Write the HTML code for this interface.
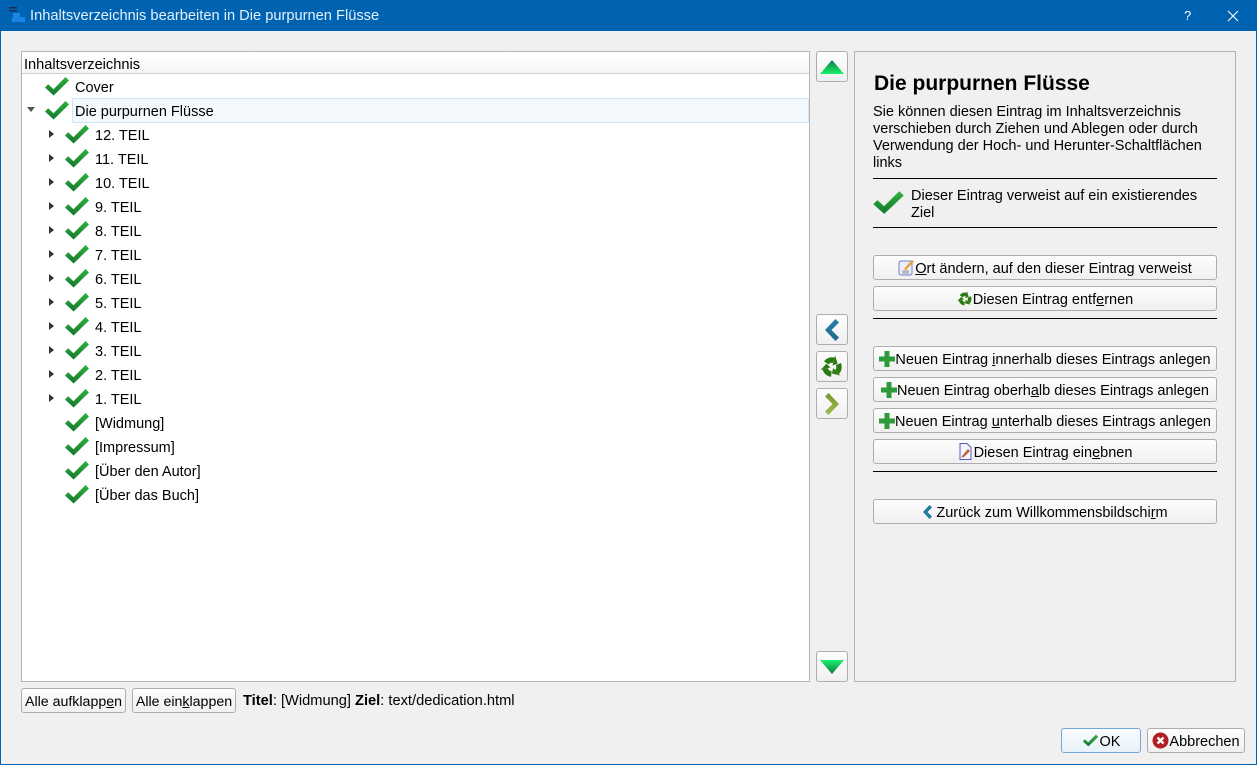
<!DOCTYPE html>
<html><head><meta charset="utf-8"><style>
html,body{margin:0;padding:0;width:1257px;height:765px;overflow:hidden;background:#f0f0f0}
body{font-family:"Liberation Sans",sans-serif;font-size:14.5px;color:#000;position:relative}
.a{position:absolute;white-space:nowrap}
.t{position:absolute;white-space:nowrap;line-height:24px;height:24px;background:transparent;margin-top:1px}
.b{position:absolute;box-sizing:border-box;border:1px solid #adadad;border-radius:3px;background:linear-gradient(#fdfdfd,#f0f0f0);display:flex;align-items:center;justify-content:center;white-space:nowrap;height:25px}
.b span{position:relative;top:1px}
.c{position:absolute;width:26px;height:22px}
.tri{position:absolute;width:0;height:0;border-top:4.5px solid transparent;border-bottom:4.5px solid transparent;border-left:5px solid #333}
.hr{position:absolute;left:873px;width:344px;height:1px;background:#000}
svg{display:block;flex:none}
u{text-underline-offset:1px}
</style></head><body>
<svg width="0" height="0" style="position:absolute"><defs>
<linearGradient id="cg" x1="0" y1="0" x2="0" y2="1"><stop offset="0" stop-color="#2fb040"/><stop offset="1" stop-color="#14792a"/></linearGradient>
<linearGradient id="up" x1="0" y1="0" x2="0" y2="1"><stop offset="0" stop-color="#067a3a"/><stop offset="1" stop-color="#1cf070"/></linearGradient>
<linearGradient id="dn" x1="0" y1="0" x2="0" y2="1"><stop offset="0" stop-color="#1cf070"/><stop offset="1" stop-color="#067a3a"/></linearGradient>
<linearGradient id="bl" x1="0" y1="0" x2="0" y2="1"><stop offset="0" stop-color="#2a7fa8"/><stop offset="1" stop-color="#1f6a90"/></linearGradient>
<linearGradient id="gr" x1="0" y1="0" x2="0" y2="1"><stop offset="0" stop-color="#6f9a2a"/><stop offset="1" stop-color="#a3bd52"/></linearGradient>
<symbol id="chk" viewBox="0 0 26 22"><path d="M1 11.500 4.200 8.300 9.500 13.200 21.500 1 25 4.500 9.600 19.500Z" fill="url(#cg)"/></symbol>
<g id="ra"><path d="M6.270 7.980A7 7 0 0 1 13.810 5.240" fill="none" stroke="#2c7a12" stroke-width="5.500"/><path d="M12.390 10.550 15.100.41 17.630 8.750Z" fill="#2c7a12"/></g>
<symbol id="rec" viewBox="0 0 24 24"><use href="#ra"/><use href="#ra" transform="rotate(120 12 12)"/><use href="#ra" transform="rotate(240 12 12)"/></symbol>
<symbol id="plus" viewBox="0 0 16 16"><path d="M5.500 0h5v5.500H16v5h-5.500V16h-5v-5.500H0v-5h5.500Z" fill="#2f9a3a"/></symbol>
</defs></svg>

<!-- window frame -->
<div class="a" style="left:0;top:0;width:1255px;height:763px;border:1px solid #0063b1"></div>
<div class="a" style="left:0;top:0;width:1257px;height:31px;background:#0063b1"></div>
<svg class="a" style="left:8px;top:7px" width="18" height="16" viewBox="0 0 18 16"><path d="M1 0h8v1.500H1zM1 3h8v1.500H1z" fill="#1c2c55"/><path d="M5 6h7v4h5v5H4v-4h1z" fill="#1a84e4"/></svg>
<div class="a" style="left:30px;top:7px;font-size:14.65px;line-height:18px;color:#e4f0fa">Inhaltsverzeichnis bearbeiten in Die purpurnen Flüsse</div>
<div class="a" style="left:1184px;top:7px;color:#fff;font-size:13px;line-height:18px">?</div>
<svg class="a" style="left:1227px;top:10px" width="12" height="12" viewBox="0 0 12 12"><path d="M1 1 11 11M11 1 1 11" stroke="#fff" stroke-width="1.100"/></svg>

<!-- tree -->
<div class="a" style="left:21px;top:51px;width:787px;height:629px;border:1px solid #b4b4b4;background:#fff"></div>
<div class="a" style="left:22px;top:52px;height:21px;background:linear-gradient(#fff,#f6f6f6);border-bottom:1px solid #d0d0d0;line-height:26px;padding-left:2px;width:785px;font-size:14.6px">Inhaltsverzeichnis</div>
<div class="a" style="left:72px;top:98px;width:735px;height:23px;background:#f4f9fe;border:1px solid #cfe4f6;border-radius:2px"></div>

<svg class="c" style="left:44px;top:76px"><use href="#chk"/></svg><div class="t" style="left:75px;top:75px">Cover</div>
<div class="a" style="left:27px;top:107px;width:0;height:0;border-left:4.5px solid transparent;border-right:4.5px solid transparent;border-top:5px solid #555"></div>
<svg class="c" style="left:44px;top:100px"><use href="#chk"/></svg><div class="t" style="left:75px;top:99px">Die purpurnen Flüsse</div>

<div class="tri" style="left:49px;top:129.500px"></div><svg class="c" style="left:64px;top:124px"><use href="#chk"/></svg><div class="t" style="left:95px;top:123px">12. TEIL</div>
<div class="tri" style="left:49px;top:153.500px"></div><svg class="c" style="left:64px;top:148px"><use href="#chk"/></svg><div class="t" style="left:95px;top:147px">11. TEIL</div>
<div class="tri" style="left:49px;top:177.500px"></div><svg class="c" style="left:64px;top:172px"><use href="#chk"/></svg><div class="t" style="left:95px;top:171px">10. TEIL</div>
<div class="tri" style="left:49px;top:201.500px"></div><svg class="c" style="left:64px;top:196px"><use href="#chk"/></svg><div class="t" style="left:95px;top:195px">9. TEIL</div>
<div class="tri" style="left:49px;top:225.500px"></div><svg class="c" style="left:64px;top:220px"><use href="#chk"/></svg><div class="t" style="left:95px;top:219px">8. TEIL</div>
<div class="tri" style="left:49px;top:249.500px"></div><svg class="c" style="left:64px;top:244px"><use href="#chk"/></svg><div class="t" style="left:95px;top:243px">7. TEIL</div>
<div class="tri" style="left:49px;top:273.500px"></div><svg class="c" style="left:64px;top:268px"><use href="#chk"/></svg><div class="t" style="left:95px;top:267px">6. TEIL</div>
<div class="tri" style="left:49px;top:297.500px"></div><svg class="c" style="left:64px;top:292px"><use href="#chk"/></svg><div class="t" style="left:95px;top:291px">5. TEIL</div>
<div class="tri" style="left:49px;top:321.500px"></div><svg class="c" style="left:64px;top:316px"><use href="#chk"/></svg><div class="t" style="left:95px;top:315px">4. TEIL</div>
<div class="tri" style="left:49px;top:345.500px"></div><svg class="c" style="left:64px;top:340px"><use href="#chk"/></svg><div class="t" style="left:95px;top:339px">3. TEIL</div>
<div class="tri" style="left:49px;top:369.500px"></div><svg class="c" style="left:64px;top:364px"><use href="#chk"/></svg><div class="t" style="left:95px;top:363px">2. TEIL</div>
<div class="tri" style="left:49px;top:393.500px"></div><svg class="c" style="left:64px;top:388px"><use href="#chk"/></svg><div class="t" style="left:95px;top:387px">1. TEIL</div>
<svg class="c" style="left:64px;top:412px"><use href="#chk"/></svg><div class="t" style="left:95px;top:411px">[Widmung]</div>
<svg class="c" style="left:64px;top:436px"><use href="#chk"/></svg><div class="t" style="left:95px;top:435px">[Impressum]</div>
<svg class="c" style="left:64px;top:460px"><use href="#chk"/></svg><div class="t" style="left:95px;top:459px">[Über den Autor]</div>
<svg class="c" style="left:64px;top:484px"><use href="#chk"/></svg><div class="t" style="left:95px;top:483px">[Über das Buch]</div>

<!-- middle buttons -->
<div class="b" style="left:816px;top:51px;width:32px;height:31px"><svg width="24" height="14" viewBox="0 0 24 14"><path d="M12 0 24 14H0Z" fill="url(#up)"/></svg></div>
<div class="b" style="left:816px;top:314px;width:32px;height:31px"><svg width="14" height="22" viewBox="0 0 14 22"><path d="M10.500 0 14 3.500 6.500 11 14 18.500 10.500 22 0 11Z" fill="url(#bl)"/></svg></div>
<div class="b" style="left:816px;top:351px;width:32px;height:31px"><svg width="24" height="24"><use href="#rec"/></svg></div>
<div class="b" style="left:816px;top:388px;width:32px;height:31px"><svg width="14" height="22" viewBox="0 0 14 22"><path d="M3.500 0 0 3.500 7.500 11 0 18.500 3.500 22 14 11Z" fill="url(#gr)"/></svg></div>
<div class="b" style="left:816px;top:651px;width:32px;height:31px"><svg width="24" height="14" viewBox="0 0 24 14"><path d="M0 0H24L12 14Z" fill="url(#dn)"/></svg></div>

<!-- right panel -->
<div class="a" style="left:854px;top:51px;width:380px;height:629px;border:1px solid #b4b4b4"></div>
<div class="a" style="left:874px;top:71px;font-size:21px;font-weight:bold;line-height:25px">Die purpurnen Flüsse</div>
<div class="a" style="left:873px;top:104px;line-height:17px">Sie können diesen Eintrag im Inhaltsverzeichnis<br>verschieben durch Ziehen und Ablegen oder durch<br>Verwendung der Hoch- und Herunter-Schaltflächen<br>links</div>
<div class="hr" style="top:178px"></div>
<svg class="a" style="left:872px;top:190px" width="33" height="27" viewBox="0 0 26 22" preserveAspectRatio="none"><use href="#chk"/></svg>
<div class="a" style="left:911px;top:188px;line-height:17px">Dieser Eintrag verweist auf ein existierendes<br>Ziel</div>
<div class="hr" style="top:227px"></div>

<div class="b" style="left:873px;top:255px;width:344px"><svg width="17" height="17" viewBox="0 0 17 17"><rect x="1" y="2" width="13" height="14" rx="2" fill="#eef0fa" stroke="#6f7fd0"/><path d="M4 12h7M4 14h7" stroke="#888"/><path d="M6 10 14 1l2 1.500L8 11Z" fill="#e8a030"/></svg><span><u>O</u>rt ändern, auf den dieser Eintrag verweist</span></div>
<div class="b" style="left:873px;top:286px;width:344px"><svg width="16" height="16"><use href="#rec"/></svg><span>Diesen Eintrag entf<u>e</u>rnen</span></div>
<div class="hr" style="top:318px"></div>
<div class="b" style="left:873px;top:346px;width:344px"><svg width="16" height="16"><use href="#plus"/></svg><span>Neuen Eintrag <u>i</u>nnerhalb dieses Eintrags anlegen</span></div>
<div class="b" style="left:873px;top:377px;width:344px"><svg width="16" height="16"><use href="#plus"/></svg><span>Neuen Eintrag oberh<u>a</u>lb dieses Eintrags anlegen</span></div>
<div class="b" style="left:873px;top:408px;width:344px"><svg width="16" height="16"><use href="#plus"/></svg><span>Neuen Eintrag <u>u</u>nterhalb dieses Eintrags anlegen</span></div>
<div class="b" style="left:873px;top:439px;width:344px"><svg width="15" height="17" viewBox="0 0 15 17" style="margin-right:1px"><path d="M2 .5h7l4 4v12H2Z" fill="#f4f4ff" stroke="#5a5ac0"/><path d="M4 13 10 6l2 2-6 6-2.500.5Z" fill="#c0603a"/></svg><span>Diesen Eintrag ein<u>e</u>bnen</span></div>
<div class="hr" style="top:471px"></div>
<div class="b" style="left:873px;top:499px;width:344px"><svg width="11" height="14" viewBox="0 0 11 14" style="margin-right:3px"><path d="M7.500 0 10 2.500 5.500 7 10 11.500 7.500 14 1 7Z" fill="#217a9e"/></svg><span>Zurück zum Willkommensbildschi<u>r</u>m</span></div>

<!-- bottom -->
<div class="b" style="left:21px;top:688px;width:105px;font-size:14.2px"><span>Alle aufklapp<u>e</u>n</span></div>
<div class="b" style="left:132px;top:688px;width:104px;font-size:14.2px"><span>Alle ein<u>k</u>lappen</span></div>
<div class="a" style="left:243px;top:692px;line-height:18px;font-size:14.65px"><b>Titel</b>: [Widmung] <b>Ziel</b>: text/dedication.html</div>

<div class="b" style="left:1061px;top:728px;width:80px;border-color:#72a9d8;background:linear-gradient(#f8fbfe,#e8f1f9)"><svg width="17" height="14" viewBox="0 0 26 22" style="margin-right:1px"><use href="#chk"/></svg><span>OK</span></div>
<div class="b" style="left:1147px;top:728px;width:98px"><svg width="17" height="17" viewBox="0 0 17 17"><circle cx="8.500" cy="8.500" r="8" fill="#b01e22"/><path d="M5.500 5.500 11.500 11.500M11.500 5.500 5.500 11.500" stroke="#fff" stroke-width="2.400"/></svg><span>Abbrechen</span></div>
</body></html>
